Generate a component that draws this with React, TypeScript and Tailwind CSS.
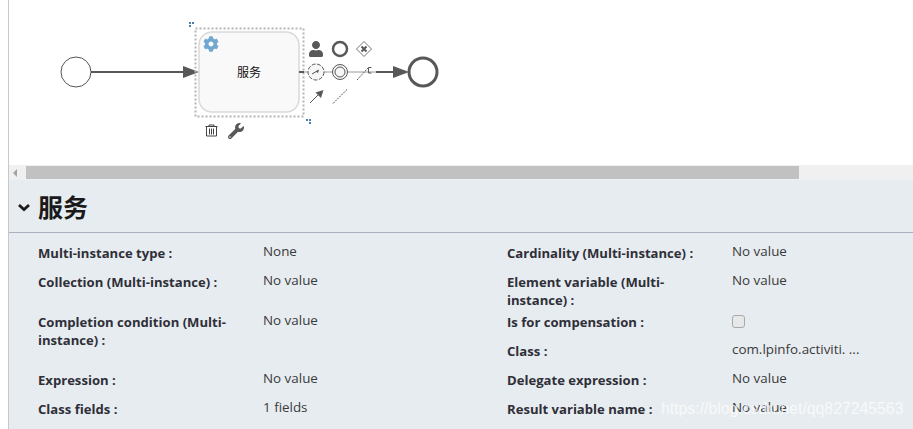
import React from "react";
import { FaCog, FaWrench, FaUser } from "react-icons/fa";

const font = "font-['Open_Sans','Noto_Sans_CJK_SC',sans-serif]";

function Diagram() {
  const dark = "#585858";
  return (
    <svg width="904" height="165" viewBox="9 0 904 165" className="block" fill="none">
      {/* start */}
      <circle cx="76" cy="72" r="15" stroke="#555" strokeWidth="1" fill="#fff" />
      <line x1="91" y1="72" x2="186" y2="72" stroke={dark} strokeWidth="2" />
      <polygon points="183,66 199,72 183,78" fill={dark} />
      {/* selection */}
      <rect x="195.5" y="28.5" width="108" height="88" stroke="#b5b5b5" strokeWidth="2" strokeDasharray="2 2" />
      {/* task */}
      <rect x="199" y="32" width="100" height="80" rx="13" fill="#f9f9f9" stroke="#d9d9d9" strokeWidth="1.5" />
      <FaCog x={203} y={36} width={17} height={17} color="#72a7d0" />
      <text x="249" y="77" textAnchor="middle" fontSize="12" fill="#111" fontFamily="'Noto Sans CJK SC',sans-serif">服务</text>
      {/* handles */}
      <rect x="189" y="22" width="2" height="2" fill="#4a7fb5" />
      <rect x="192" y="22" width="2" height="2" fill="#4a7fb5" />
      <rect x="189" y="25" width="2" height="2" fill="#4a7fb5" />
      <rect x="306" y="119" width="2" height="2" fill="#4a7fb5" />
      <rect x="309" y="119" width="2" height="2" fill="#4a7fb5" />
      <rect x="309" y="122" width="2" height="2" fill="#4a7fb5" />
      {/* outgoing flow */}
      <line x1="299" y1="72" x2="304" y2="72" stroke={dark} strokeWidth="2" />
      <line x1="304" y1="72" x2="376" y2="72" stroke="#cccccc" strokeWidth="2" />
      <line x1="376" y1="72" x2="396" y2="72" stroke={dark} strokeWidth="2" />
      <polygon points="393,66 409,72 393,78" fill={dark} />
      <circle cx="423" cy="72" r="14" stroke={dark} strokeWidth="3" fill="#fff" />
      {/* palette row 1 */}
      <FaUser x={308} y={41} width={16} height={16} color={dark} />
      <circle cx="340" cy="49" r="7" stroke={dark} strokeWidth="2.5" />
      <polygon points="364,41.5 371.5,49 364,56.5 356.5,49" stroke="#777" strokeWidth="1" fill="#fff" />
      <path d="M361.5 46.5l5 5M366.5 46.5l-5 5" stroke={dark} strokeWidth="2" />
      {/* palette row 2 */}
      <circle cx="316" cy="72" r="8" stroke={dark} strokeWidth="1" fill="#f6f6f6" strokeDasharray="4 1.5" />
      <path d="M312 74l6-3.5" stroke={dark} strokeWidth="1" />
      <path d="M315.5 71.5l3.5-2-1 3.5z" fill={dark} />
      <circle cx="340" cy="72" r="7.5" stroke={dark} strokeWidth="1" fill="#f6f6f6" />
      <circle cx="340" cy="72" r="5" stroke={dark} strokeWidth="1" />
      <path d="M357 80l11-12" stroke={dark} strokeWidth="1" strokeDasharray="2 1" />
      <path d="M371.5 67.5h-3v5.5h3" stroke={dark} strokeWidth="1" />
      {/* palette row 3 */}
      <path d="M310 103l10-10" stroke={dark} strokeWidth="1" />
      <polygon points="323.5,90 321,98 315.5,92.5" fill={dark} />
      <path d="M333 103.5l14-14" stroke={dark} strokeWidth="1" strokeDasharray="2 1" />
      {/* trash */}
      <g stroke="#444" strokeWidth="1">
        <path d="M205.5 126.5h12M209 126.5v-1.5h5v1.5" />
        <path d="M206.5 126.5v9.5h10v-9.5" />
        <path d="M209.5 128.5v6M211.5 128.5v6M213.5 128.5v6" />
      </g>
      <FaWrench x={228} y={123} width={15} height={15} color={dark} />
    </svg>
  );
}

const Label = ({ children, className = "" }: { children: React.ReactNode; className?: string }) => (
  <div className={`pr-6 text-[13.1px] leading-[18px] font-bold text-[#2f2f38] ${className}`}>{children}</div>
);
const Value = ({ children }: { children: React.ReactNode }) => (
  <div className="-mt-0.5 text-[13.4px] leading-[18px] text-[#3a3a3a]">{children}</div>
);

export default function App() {
  return (
    <div className={`flex h-[429px] w-[913px] overflow-hidden bg-white pl-2 ${font}`}>
      <div className="flex min-w-0 flex-1 flex-col border-l border-[#c8c8c8]">
        <div className="h-[165px]">
          <Diagram />
        </div>
        <div className="flex h-[15px] items-center bg-[#f0f0f0] pl-[4px]">
          <div className="h-0 w-0 border-y-[4px] border-r-[4px] border-y-transparent border-r-[#a3a3a3]" />
          <div className="ml-[9px] h-[13px] w-[773px] bg-[#c1c1c1]" />
        </div>
        <div className="relative flex-1 bg-[#e7ecf0]">
          <div className="flex h-[53px] items-center border-b border-[#aab0bf] pl-[8px]">
            <svg width="14" height="14" viewBox="0 0 14 14" fill="none" className="mt-[2px]">
              <path d="M2 5l5 4.5L12 5" stroke="#1c1c1c" strokeWidth="2.8" />
            </svg>
            <h1 className="ml-[7px] font-['Noto_Sans_CJK_SC',sans-serif] text-[25px] leading-none font-bold text-[#1a1a1a]">服务</h1>
          </div>
          <div className="grid grid-cols-[225px_244px_225px_1fr] grid-rows-[29px_40px_29px_29px_29px_29px] pt-[11px] pl-[29px]">
            <Label>Multi-instance type :</Label>
            <Value>None</Value>
            <Label>Cardinality (Multi-instance) :</Label>
            <Value>No value</Value>

            <Label>Collection (Multi-instance) :</Label>
            <Value>No value</Value>
            <Label>Element variable (Multi-instance) :</Label>
            <Value>No value</Value>

            <Label className="row-span-2">Completion condition (Multi-instance) :</Label>
            <div className="row-span-2">
              <Value>No value</Value>
            </div>
            <Label>Is for compensation :</Label>
            <div>
              <input type="checkbox" readOnly className="mt-[2px] block h-[13px] w-[13px] appearance-none rounded-[3px] border border-[#a9a9a9] bg-[#e6e8ea]" />
            </div>

            <Label>Class :</Label>
            <Value>com.lpinfo.activiti. ...</Value>

            <Label>Expression :</Label>
            <Value>No value</Value>
            <Label>Delegate expression :</Label>
            <Value>No value</Value>

            <Label>Class fields :</Label>
            <Value>1 fields</Value>
            <Label>Result variable name :</Label>
            <Value>No value</Value>
          </div>
          <div className="absolute top-[220px] left-[652px] font-['Liberation_Sans',sans-serif] text-[15.8px] leading-[18px] whitespace-nowrap text-white/70">
            https://blog.csdn.net/qq827245563
          </div>
        </div>
      </div>
    </div>
  );
}
